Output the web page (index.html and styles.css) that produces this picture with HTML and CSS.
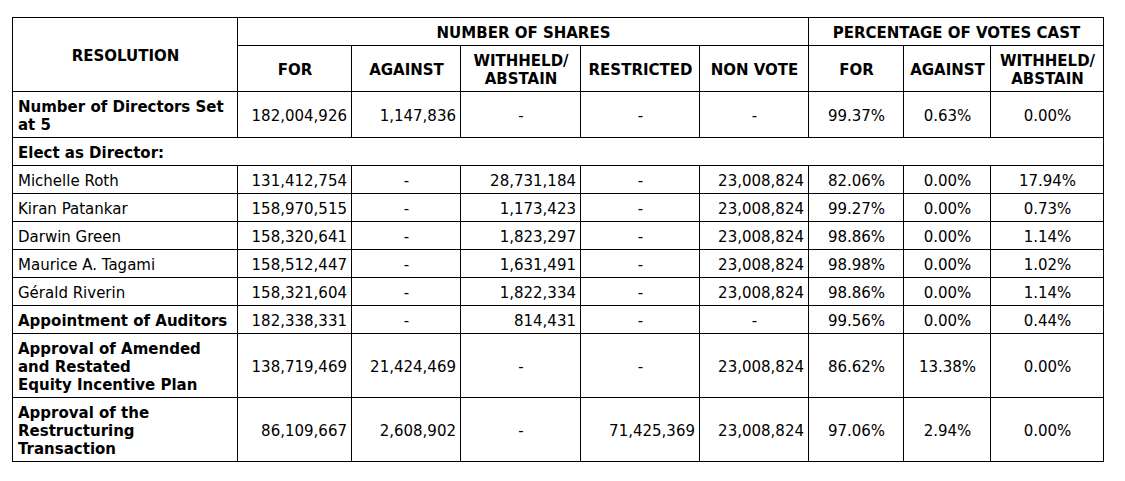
FILE: index.html
```html
<!DOCTYPE html>
<html>
<head>
<meta charset="utf-8">
<link rel="stylesheet" href="styles.css">
</head>
<body>
<table class="votes">
  <colgroup>
    <col class="c-res">
    <col class="c-for">
    <col class="c-against">
    <col class="c-withheld">
    <col class="c-restricted">
    <col class="c-nonvote">
    <col class="c-pfor">
    <col class="c-pagainst">
    <col class="c-pwithheld">
  </colgroup>
  <thead>
    <tr>
      <th rowspan="2">RESOLUTION</th>
      <th colspan="5">NUMBER OF SHARES</th>
      <th colspan="3">PERCENTAGE OF VOTES CAST</th>
    </tr>
    <tr>
      <th>FOR</th>
      <th>AGAINST</th>
      <th>WITHHELD/<br>ABSTAIN</th>
      <th>RESTRICTED</th>
      <th>NON VOTE</th>
      <th>FOR</th>
      <th>AGAINST</th>
      <th>WITHHELD/<br>ABSTAIN</th>
    </tr>
  </thead>
  <tbody>
    <tr>
      <td class="name bold">Number of Directors Set at 5</td>
      <td class="num">182,004,926</td>
      <td class="num">1,147,836</td>
      <td class="ctr">-</td>
      <td class="ctr">-</td>
      <td class="ctr">-</td>
      <td class="ctr">99.37%</td>
      <td class="ctr">0.63%</td>
      <td class="ctr">0.00%</td>
    </tr>
    <tr>
      <td class="name bold" colspan="9">Elect as Director:</td>
    </tr>
    <tr>
      <td class="name">Michelle Roth</td>
      <td class="num">131,412,754</td>
      <td class="ctr">-</td>
      <td class="num">28,731,184</td>
      <td class="ctr">-</td>
      <td class="num">23,008,824</td>
      <td class="ctr">82.06%</td>
      <td class="ctr">0.00%</td>
      <td class="ctr">17.94%</td>
    </tr>
    <tr>
      <td class="name">Kiran Patankar</td>
      <td class="num">158,970,515</td>
      <td class="ctr">-</td>
      <td class="num">1,173,423</td>
      <td class="ctr">-</td>
      <td class="num">23,008,824</td>
      <td class="ctr">99.27%</td>
      <td class="ctr">0.00%</td>
      <td class="ctr">0.73%</td>
    </tr>
    <tr>
      <td class="name">Darwin Green</td>
      <td class="num">158,320,641</td>
      <td class="ctr">-</td>
      <td class="num">1,823,297</td>
      <td class="ctr">-</td>
      <td class="num">23,008,824</td>
      <td class="ctr">98.86%</td>
      <td class="ctr">0.00%</td>
      <td class="ctr">1.14%</td>
    </tr>
    <tr>
      <td class="name">Maurice A. Tagami</td>
      <td class="num">158,512,447</td>
      <td class="ctr">-</td>
      <td class="num">1,631,491</td>
      <td class="ctr">-</td>
      <td class="num">23,008,824</td>
      <td class="ctr">98.98%</td>
      <td class="ctr">0.00%</td>
      <td class="ctr">1.02%</td>
    </tr>
    <tr>
      <td class="name">Gérald Riverin</td>
      <td class="num">158,321,604</td>
      <td class="ctr">-</td>
      <td class="num">1,822,334</td>
      <td class="ctr">-</td>
      <td class="num">23,008,824</td>
      <td class="ctr">98.86%</td>
      <td class="ctr">0.00%</td>
      <td class="ctr">1.14%</td>
    </tr>
    <tr>
      <td class="name bold">Appointment of Auditors</td>
      <td class="num">182,338,331</td>
      <td class="ctr">-</td>
      <td class="num">814,431</td>
      <td class="ctr">-</td>
      <td class="ctr">-</td>
      <td class="ctr">99.56%</td>
      <td class="ctr">0.00%</td>
      <td class="ctr">0.44%</td>
    </tr>
    <tr>
      <td class="name bold">Approval of Amended<br>and Restated<br>Equity Incentive Plan</td>
      <td class="num">138,719,469</td>
      <td class="num">21,424,469</td>
      <td class="ctr">-</td>
      <td class="ctr">-</td>
      <td class="num">23,008,824</td>
      <td class="ctr">86.62%</td>
      <td class="ctr">13.38%</td>
      <td class="ctr">0.00%</td>
    </tr>
    <tr>
      <td class="name bold">Approval of the<br>Restructuring<br>Transaction</td>
      <td class="num">86,109,667</td>
      <td class="num">2,608,902</td>
      <td class="ctr">-</td>
      <td class="num">71,425,369</td>
      <td class="num">23,008,824</td>
      <td class="ctr">97.06%</td>
      <td class="ctr">2.94%</td>
      <td class="ctr">0.00%</td>
    </tr>
  </tbody>
</table>
</body>
</html>
```

FILE: styles.css
```css
html, body {
  margin: 0;
  padding: 0;
  background: #ffffff;
}

body {
  padding: 17px 0 0 12px;
  font-family: "DejaVu Sans", Verdana, sans-serif;
  font-size: 15px;
  line-height: 18px;
  color: #000000;
}

.votes {
  border-collapse: collapse;
  table-layout: fixed;
  width: 1092px;
}

.c-res { width: 225px; }
.c-for { width: 114px; }
.c-against { width: 109px; }
.c-withheld { width: 120px; }
.c-restricted { width: 119px; }
.c-nonvote { width: 109px; }
.c-pfor { width: 95px; }
.c-pagainst { width: 87px; }
.c-pwithheld { width: 113px; }

.votes th,
.votes td {
  border: 1px solid #000000;
  padding: 6px 4px 3px 5px;
  vertical-align: middle;
}

.votes th {
  font-weight: bold;
  text-align: center;
}

.name {
  text-align: left;
}

.bold {
  font-weight: bold;
}

.num {
  text-align: right;
}

.ctr {
  text-align: center;
}
```
